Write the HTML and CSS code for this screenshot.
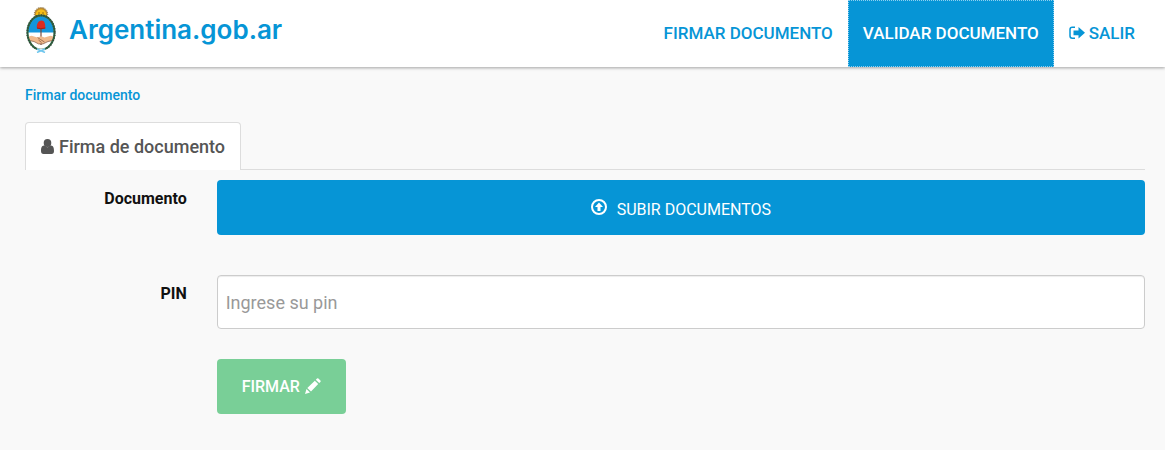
FILE: index.html
```html
<!DOCTYPE html>
<html lang="es">
<head>
  <meta charset="UTF-8">
  <meta name="viewport" content="width=device-width, initial-scale=1.0">
  <title>Firmar documento</title>
  <link rel="stylesheet" href="styles.css">
</head>
<body>
  <header class="navbar">
    <a class="brand" href="#">
      <svg class="brand-shield" viewBox="0 0 30 46" aria-hidden="true">
        <!-- sun -->
        <circle cx="15" cy="7" r="6.5" fill="#b98a35"/>
        <circle cx="15" cy="7" r="6.700" fill="none" stroke="#7b6a4a" stroke-width="1" stroke-dasharray="1 1.2"/>
        <circle cx="15" cy="7.5" r="5.2" fill="#f6bd16"/>
        <path d="M12 6h2M16 6h2M13 8.5h4" stroke="#7a5a14" stroke-width=".8"/>
        <!-- oval -->
        <ellipse cx="15" cy="25.500" rx="13" ry="16.500" fill="#fff"/>
        <path d="M2 25.500a13 16.500 0 0 1 26 0z" fill="#1496dc"/>
        <!-- pike and cap -->
        <path d="M15 20v18" stroke="#7b4a3c" stroke-width="1.200"/>
        <path d="M11 21.500c-.8-3.500 1-8 4.500-8 3 0 4 3.500 3.800 8-2 1-5.500 1-8.300 0z" fill="#dc2a20"/>
        <path d="M11 21q3.500 1.400 8.300 0" fill="none" stroke="#8d2019" stroke-width=".8"/>
        <!-- hands -->
        <path d="M2.500 29.500l3-.7 6 1.700 3.500-1.300 3.500 1.300 6-1.700 3 .7-.8 4.300-5.200.7-4.500 2.200-2.500.3-2-.3-4-2.200-5-.7z" fill="#f0b98c"/>
        <path d="M3 33.500l5 1 4.500 2.400h4.500l5-2.400 5-1M11.500 30.500l3 2 4 2.500M12.500 33l3 2.500" fill="none" stroke="#80513a" stroke-width=".7"/>
        <!-- laurels -->
        <ellipse cx="15" cy="25.500" rx="13.500" ry="17" fill="none" stroke="#2b6b43" stroke-width="2"/>
        <ellipse cx="15" cy="25.500" rx="13.700" ry="17.200" fill="none" stroke="#3a4239" stroke-width="2" stroke-dasharray="1 1.500"/>
        <!-- ribbon -->
        <path d="M11 41.500h8v2h-8z" fill="#fff"/>
        <path d="M11 42l8 3.500M19 42l-8 3.500M13 43.500h4" stroke="#6ec6ee" stroke-width="1.500"/>
      </svg>
      <span class="brand-name">Argentina.gob.ar</span>
    </a>
    <nav class="nav">
      <a class="nav-link" href="#firmar">FIRMAR DOCUMENTO</a>
      <a class="nav-link active" href="#validar">VALIDAR DOCUMENTO</a>
      <a class="nav-link" href="#salir">
        <svg class="icon-exit" viewBox="0 0 16 14" aria-hidden="true">
          <path d="M6 1.300H3.300Q1 1.300 1 3.500v6.500Q1 12.200 3.300 12.200H6" fill="none" stroke="currentColor" stroke-width="1.500"/>
          <path d="M4.500 4.500h5V1L16 6.800l-6.500 5.800V9.200h-5z" fill="currentColor"/>
        </svg>
        SALIR
      </a>
    </nav>
  </header>

  <main class="content">
    <a class="breadcrumb" href="#firmar">Firmar documento</a>

    <div class="tabs">
      <a class="tab" href="#firma">
        <svg class="icon-user" viewBox="0 0 13 15" aria-hidden="true">
          <path d="M6.500 0a3.800 4 0 0 1 0 8 3.800 4 0 0 1 0-8zM3 6.500q3.500 3.400 7 0c2.400.2 3 2.600 3 5.500q0 3-2.500 3h-8Q0 15 0 12c0-2.900.6-5.300 3-5.500z" fill="currentColor"/>
        </svg>
        Firma de documento
      </a>
    </div>

    <form class="form">
      <div class="row">
        <label class="label" for="documento">Documento</label>
        <div class="field">
          <button class="btn btn-upload" id="documento" type="button">
            <svg class="icon-upload" viewBox="0 0 16 16" aria-hidden="true">
              <circle cx="8" cy="8" r="7" fill="none" stroke="currentColor" stroke-width="2"/>
              <path d="M8 3.500L12 8H9.500v4h-3V8H4z" fill="currentColor"/>
            </svg>
            SUBIR DOCUMENTOS
          </button>
        </div>
      </div>
      <div class="row">
        <label class="label" for="pin">PIN</label>
        <div class="field">
          <input class="input" id="pin" type="password" placeholder="Ingrese su pin">
        </div>
      </div>
      <div class="row row-submit">
        <div class="field">
          <button class="btn btn-sign" type="submit">
            FIRMAR
            <svg class="icon-pencil" viewBox="0 0 16 16" aria-hidden="true">
              <path d="M0 16l1.500-5L5 14.500zM2.300 10l7.500-7.300 3.400 3.400L6 13.600zM10.800 1.700L12 .5q.7-.6 1.400 0l2 2q.6.700 0 1.400l-1.200 1.200z" fill="currentColor"/>
            </svg>
          </button>
        </div>
      </div>
    </form>
  </main>
</body>
</html>
```
FILE: styles.css
```css
* {
  box-sizing: border-box;
}

body {
  margin: 0;
  background-color: #f9f9f9;
  color: #111;
  font-family: Roboto, "Liberation Sans", sans-serif;
  font-size: 16px;
  line-height: 24px;
}

a {
  color: #0695d6;
  text-decoration: none;
}

.navbar {
  display: flex;
  justify-content: space-between;
  padding: 0 15px 0 25px;
  background-color: #fff;
  box-shadow: 0 1px 3px rgba(0, 0, 0, 0.35);
}

.brand {
  display: flex;
  align-items: center;
  gap: 12px;
  padding-bottom: 7px;
}

.brand-shield {
  width: 32px;
  height: 46px;
}

.brand-name {
  font-family: Inter, sans-serif;
  font-size: 26px;
  font-weight: 600;
}

.nav {
  display: flex;
}

.nav-link {
  display: flex;
  align-items: center;
  gap: 4px;
  height: 67px;
  padding: 0 15px 2px;
  font-size: 17px;
  font-weight: 500;
}

.nav-link.active {
  background-color: #0695d6;
  color: #fff;
  outline: 1px dotted #8fd0f0;
  outline-offset: -1px;
}

.icon-exit {
  width: 16px;
  height: 14px;
}

.content {
  padding: 16px 20px 36px 25px;
}

.breadcrumb {
  display: block;
  font-size: 14px;
  font-weight: 500;
}

.tabs {
  display: flex;
  margin-top: 15px;
  border-bottom: 1px solid #ddd;
}

.tab {
  display: flex;
  align-items: center;
  gap: 5px;
  height: 48px;
  margin-bottom: -1px;
  padding: 0 15px;
  border: 1px solid #ddd;
  border-bottom: 0;
  border-radius: 4px 4px 0 0;
  background-color: #fff;
  color: #555;
  font-size: 18px;
  font-weight: 500;
}

.icon-user {
  width: 13px;
  height: 15px;
}

.form {
  padding-top: 10px;
}

.row {
  display: flex;
  margin: 0 -15px 40px;
}

.row:nth-child(2) {
  margin-bottom: 30px;
}

.row-submit {
  justify-content: flex-end;
  margin-bottom: 0;
}

.label {
  flex: 1;
  padding: 7px 15px 0;
  font-weight: 700;
  text-align: right;
}

.field {
  width: 83.3333%;
  padding: 0 15px;
}

.btn {
  display: flex;
  align-items: center;
  justify-content: center;
  height: 55px;
  border: 0;
  border-radius: 4px;
  color: #fff;
  font-family: inherit;
  font-size: 16px;
}

.btn-upload {
  gap: 10px;
  width: 100%;
  padding: 3px 0 0;
  background-color: #0695d6;
}

.icon-upload {
  width: 16px;
  height: 16px;
  margin-bottom: 4px;
}

.btn-sign {
  gap: 5px;
  padding: 0 25px;
  background-color: #79cf97;
  font-weight: 500;
}

.icon-pencil {
  width: 16px;
  height: 16px;
  margin-bottom: 2px;
}

.input {
  display: block;
  width: 100%;
  height: 54px;
  padding: 0 8px;
  border: 1px solid #ccc;
  border-radius: 4px;
  background-color: #fff;
  box-shadow: inset 0 1px 1px rgba(0, 0, 0, 0.075);
  color: #555;
  font-family: inherit;
  font-size: 18px;
}

.input::placeholder {
  color: #999;
}
```
